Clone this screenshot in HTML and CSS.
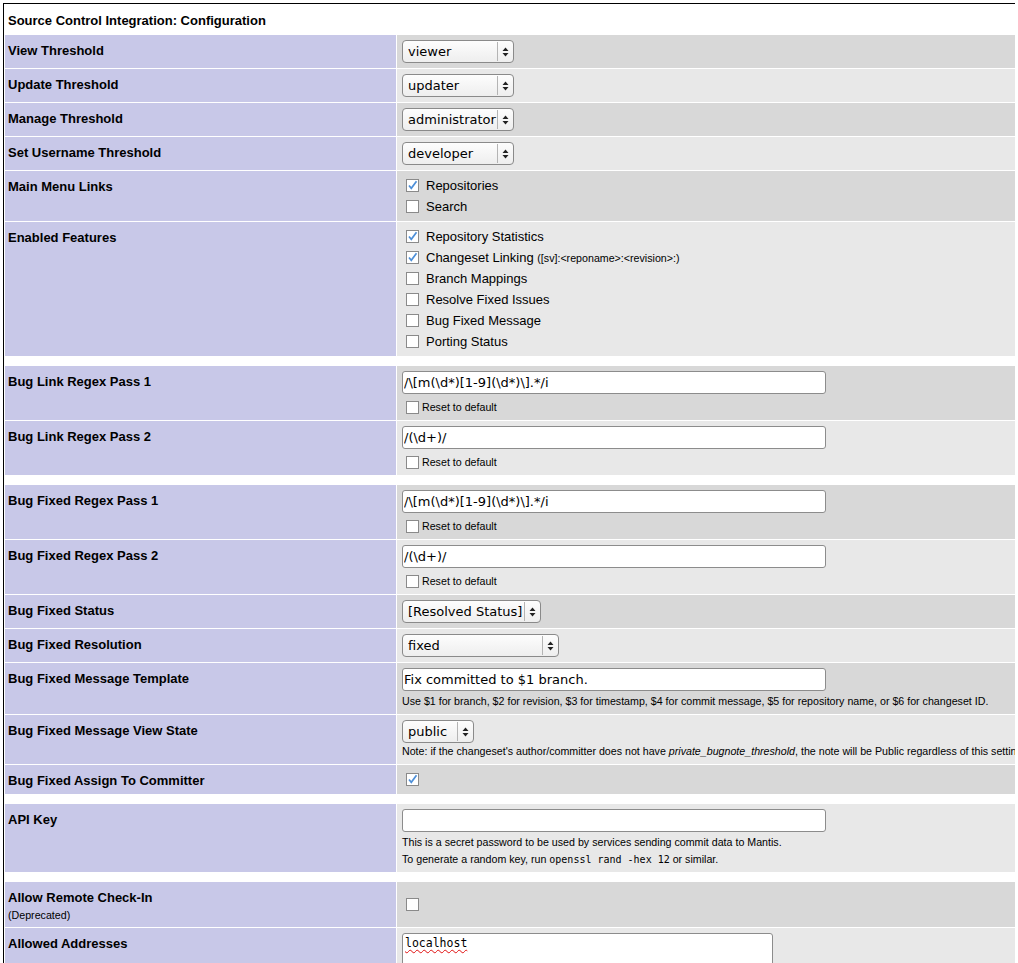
FILE: index.html
```html
<!DOCTYPE html>
<html lang="en">
<head>
<meta charset="utf-8">
<title>Source Control Integration: Configuration</title>
<link rel="stylesheet" href="styles.css">
</head>
<body>
<table class="cfg">
  <tr>
    <td class="form-title" colspan="2">Source Control Integration: Configuration</td>
  </tr>

  <tr class="row-1">
    <td class="category">View Threshold</td>
    <td class="val"><div class="sel w-112"><select><option>viewer</option></select><span class="sel-btn"><svg width="7" height="10" viewBox="0 0 7 10"><path d="M0.5 4 L3.5 0.5 L6.5 4 Z M0.5 6 L3.5 9.5 L6.5 6 Z" fill="#222"/></svg></span></div></td>
  </tr>
  <tr class="row-2">
    <td class="category">Update Threshold</td>
    <td class="val"><div class="sel w-112"><select><option>updater</option></select><span class="sel-btn"><svg width="7" height="10" viewBox="0 0 7 10"><path d="M0.5 4 L3.5 0.5 L6.5 4 Z M0.5 6 L3.5 9.5 L6.5 6 Z" fill="#222"/></svg></span></div></td>
  </tr>
  <tr class="row-1">
    <td class="category">Manage Threshold</td>
    <td class="val"><div class="sel w-112"><select><option>administrator</option></select><span class="sel-btn"><svg width="7" height="10" viewBox="0 0 7 10"><path d="M0.5 4 L3.5 0.5 L6.5 4 Z M0.5 6 L3.5 9.5 L6.5 6 Z" fill="#222"/></svg></span></div></td>
  </tr>
  <tr class="row-2">
    <td class="category">Set Username Threshold</td>
    <td class="val"><div class="sel w-112"><select><option>developer</option></select><span class="sel-btn"><svg width="7" height="10" viewBox="0 0 7 10"><path d="M0.5 4 L3.5 0.5 L6.5 4 Z M0.5 6 L3.5 9.5 L6.5 6 Z" fill="#222"/></svg></span></div></td>
  </tr>
  <tr class="row-1">
    <td class="category">Main Menu Links</td>
    <td class="val">
      <div class="opt"><span class="cb"><svg width="11" height="11" viewBox="0 0 11 11"><path d="M2 5.5 L4.3 8.3 L9.5 1.2" fill="none" stroke="#4d8fd8" stroke-width="1.7"/></svg></span>Repositories</div>
      <div class="opt"><span class="cb"></span>Search</div>
    </td>
  </tr>
  <tr class="row-2">
    <td class="category">Enabled Features</td>
    <td class="val">
      <div class="opt"><span class="cb"><svg width="11" height="11" viewBox="0 0 11 11"><path d="M2 5.5 L4.3 8.3 L9.5 1.2" fill="none" stroke="#4d8fd8" stroke-width="1.7"/></svg></span>Repository Statistics</div>
      <div class="opt"><span class="cb"><svg width="11" height="11" viewBox="0 0 11 11"><path d="M2 5.5 L4.3 8.3 L9.5 1.2" fill="none" stroke="#4d8fd8" stroke-width="1.7"/></svg></span>Changeset Linking&nbsp;<span class="small">([sv]:&lt;reponame&gt;:&lt;revision&gt;:)</span></div>
      <div class="opt"><span class="cb"></span>Branch Mappings</div>
      <div class="opt"><span class="cb"></span>Resolve Fixed Issues</div>
      <div class="opt"><span class="cb"></span>Bug Fixed Message</div>
      <div class="opt"><span class="cb"></span>Porting Status</div>
    </td>
  </tr>

  <tr class="spacer"><td colspan="2"></td></tr>

  <tr class="row-1">
    <td class="category">Bug Link Regex Pass 1</td>
    <td class="val">
      <input class="txt" type="text" value="/\[m(\d*)[1-9](\d*)\].*/i">
      <div class="reset"><span class="cb"></span>Reset to default</div>
    </td>
  </tr>
  <tr class="row-2">
    <td class="category">Bug Link Regex Pass 2</td>
    <td class="val">
      <input class="txt" type="text" value="/(\d+)/">
      <div class="reset"><span class="cb"></span>Reset to default</div>
    </td>
  </tr>

  <tr class="spacer"><td colspan="2"></td></tr>

  <tr class="row-1">
    <td class="category">Bug Fixed Regex Pass 1</td>
    <td class="val">
      <input class="txt" type="text" value="/\[m(\d*)[1-9](\d*)\].*/i">
      <div class="reset"><span class="cb"></span>Reset to default</div>
    </td>
  </tr>
  <tr class="row-2">
    <td class="category">Bug Fixed Regex Pass 2</td>
    <td class="val">
      <input class="txt" type="text" value="/(\d+)/">
      <div class="reset"><span class="cb"></span>Reset to default</div>
    </td>
  </tr>
  <tr class="row-1">
    <td class="category">Bug Fixed Status</td>
    <td class="val"><div class="sel w-139"><select><option>[Resolved Status]</option></select><span class="sel-btn"><svg width="7" height="10" viewBox="0 0 7 10"><path d="M0.5 4 L3.5 0.5 L6.5 4 Z M0.5 6 L3.5 9.5 L6.5 6 Z" fill="#222"/></svg></span></div></td>
  </tr>
  <tr class="row-2">
    <td class="category">Bug Fixed Resolution</td>
    <td class="val"><div class="sel w-157"><select><option>fixed</option></select><span class="sel-btn"><svg width="7" height="10" viewBox="0 0 7 10"><path d="M0.5 4 L3.5 0.5 L6.5 4 Z M0.5 6 L3.5 9.5 L6.5 6 Z" fill="#222"/></svg></span></div></td>
  </tr>
  <tr class="row-1">
    <td class="category">Bug Fixed Message Template</td>
    <td class="val">
      <input class="txt" type="text" value="Fix committed to $1 branch.">
      <div class="help">Use $1 for branch, $2 for revision, $3 for timestamp, $4 for commit message, $5 for repository name, or $6 for changeset ID.</div>
    </td>
  </tr>
  <tr class="row-2">
    <td class="category">Bug Fixed Message View State</td>
    <td class="val">
      <div class="sel w-72 tight"><select><option>public</option></select><span class="sel-btn"><svg width="7" height="10" viewBox="0 0 7 10"><path d="M0.5 4 L3.5 0.5 L6.5 4 Z M0.5 6 L3.5 9.5 L6.5 6 Z" fill="#222"/></svg></span></div>
      <div class="help note">Note: if the changeset's author/committer does not have <em>private_bugnote_threshold</em>, the note will be Public regardless of this setting.</div>
    </td>
  </tr>
  <tr class="row-1">
    <td class="category">Bug Fixed Assign To Committer</td>
    <td class="val">
      <div class="opt"><span class="cb"><svg width="11" height="11" viewBox="0 0 11 11"><path d="M2 5.5 L4.3 8.3 L9.5 1.2" fill="none" stroke="#4d8fd8" stroke-width="1.7"/></svg></span></div>
    </td>
  </tr>

  <tr class="spacer"><td colspan="2"></td></tr>

  <tr class="row-2">
    <td class="category">API Key</td>
    <td class="val">
      <input class="txt" type="text" value="">
      <div class="help">This is a secret password to be used by services sending commit data to Mantis.<br>To generate a random key, run <code>openssl rand -hex 12</code> or similar.</div>
    </td>
  </tr>

  <tr class="spacer"><td colspan="2"></td></tr>

  <tr class="row-1">
    <td class="category">Allow Remote Check-In<br><span class="small sub">(Deprecated)</span></td>
    <td class="val">
      <div class="opt"><span class="cb"></span></div>
    </td>
  </tr>
  <tr class="row-2">
    <td class="category">Allowed Addresses</td>
    <td class="val top">
      <div class="textarea"><span class="misspelled">localhost</span></div>
    </td>
  </tr>
</table>
</body>
</html>
```

FILE: styles.css
```css
html {
  overflow-x: hidden;
}

body {
  margin: 3px;
  background: #fff;
  color: #000;
  font-family: "Liberation Sans", Arial, sans-serif;
  font-size: 13px;
}

table.cfg {
  border: 1px solid #000;
  border-spacing: 1px;
  width: max-content;
  min-width: 1034px;
}

table.cfg td {
  padding: 4px 5px;
  font-size: 13px;
  vertical-align: middle;
}

table.cfg td.form-title {
  background: #fff;
  font-weight: bold;
  line-height: 16px;
  padding: 8px 3px 5px;
}

table.cfg td.category {
  background: #c8c8e8;
  font-weight: bold;
  vertical-align: top;
  width: 385px;
  line-height: 16px;
  padding: 8px 3px 3px;
}

tr.row-1 td.val {
  background: #d8d8d8;
}

tr.row-2 td.val {
  background: #e8e8e8;
}

table.cfg td.val.top {
  vertical-align: top;
}

table.cfg tr.spacer td {
  height: 8px;
  padding: 0;
  background: #fff;
}

/* select */
.sel {
  display: flex;
  box-sizing: border-box;
  height: 23px;
  margin: 1px 0;
  border: 1px solid #8a8a8a;
  border-radius: 4px;
  background: linear-gradient(#fdfdfd, #eeeeee);
}

.sel.tight {
  margin-bottom: 0;
}

.sel select {
  flex: 1;
  min-width: 0;
  height: 100%;
  margin: 0;
  padding: 0 0 0 5px;
  border: 0;
  background: transparent;
  color: #000;
  font-family: "DejaVu Sans", sans-serif;
  font-size: 13px;
  -webkit-appearance: none;
  appearance: none;
  outline: none;
}

.sel-btn {
  flex: none;
  width: 15px;
  display: flex;
  align-items: center;
  justify-content: center;
  border-left: 1px solid #b4b4b4;
  margin: 1px 0;
}

.w-112 { width: 112px; }
.w-139 { width: 139px; }
.w-157 { width: 157px; }
.w-72 { width: 72px; }

/* checkboxes */
.cb {
  flex: none;
  display: flex;
  align-items: center;
  justify-content: center;
  box-sizing: border-box;
  width: 13px;
  height: 13px;
  border: 1px solid #8a8a8a;
  background: #fff;
}

.cb svg {
  display: block;
}

.opt {
  display: flex;
  align-items: center;
  height: 21px;
  white-space: nowrap;
}

.opt .cb {
  margin: 0 7px 0 4px;
}

.reset {
  display: flex;
  align-items: center;
  height: 22px;
  margin: 2px 0 -2px;
  font-size: 10.67px;
}

.reset .cb {
  margin: 0 3px 0 4px;
}

/* text inputs */
.txt {
  display: block;
  box-sizing: border-box;
  width: 424px;
  height: 23px;
  margin: 1px 0 0;
  padding: 0 1px;
  border: 1px solid #8c8c8c;
  border-radius: 3px;
  background: #fff;
  color: #000;
  font-family: "DejaVu Sans", sans-serif;
  font-size: 13px;
  outline: none;
}

.help {
  margin-top: 2px;
  font-size: 10.67px;
  line-height: 17px;
}

.help.note {
  margin-top: 0;
  white-space: nowrap;
}

.help code {
  font-family: "DejaVu Sans Mono", monospace;
  font-size: 10px;
}

.small {
  font-size: 10.67px;
  font-weight: normal;
}

.sub {
  display: inline-block;
  line-height: 18px;
}

/* textarea */
.textarea {
  box-sizing: border-box;
  width: 371px;
  height: 60px;
  margin-top: 1px;
  padding: 2px 2px 1px;
  border: 1px solid #8c8c8c;
  border-radius: 3px;
  background: #fff;
  font-family: "DejaVu Sans Mono", monospace;
  font-size: 11.5px;
  line-height: 15px;
}

.misspelled {
  text-decoration: underline wavy #e01010;
  text-decoration-skip-ink: none;
  text-underline-offset: 2px;
  text-decoration-thickness: 1px;
}
```
